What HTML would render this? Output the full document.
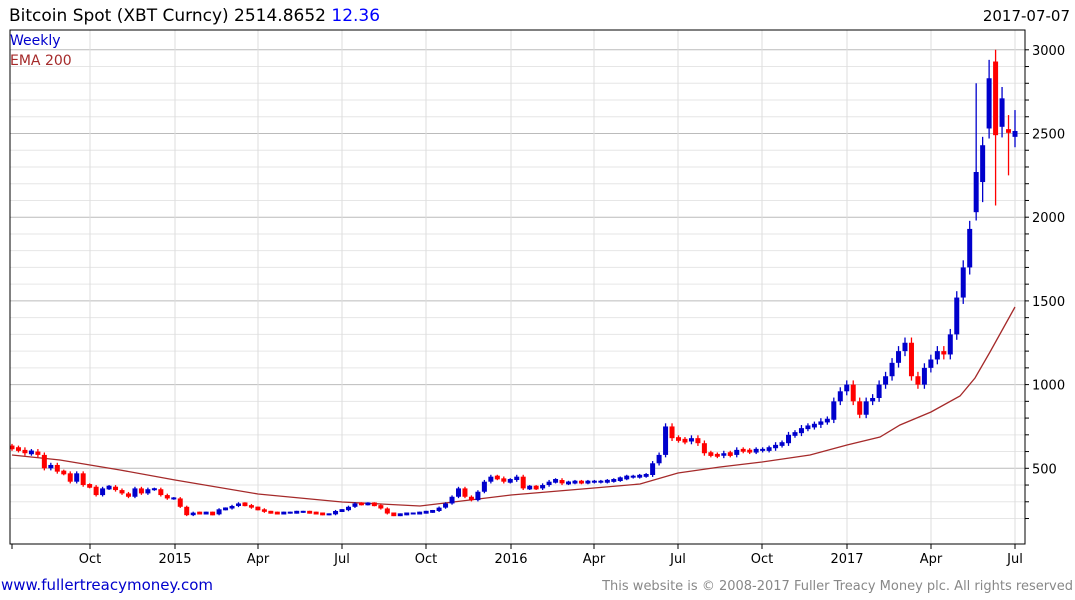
<!DOCTYPE html>
<html><head><meta charset="utf-8"><style>
body{margin:0;background:#fff;width:1075px;height:600px;overflow:hidden;font-family:"DejaVu Sans","Liberation Sans",sans-serif;}
svg{position:absolute;left:0;top:0}
</style></head><body>
<svg id="s" width="1075" height="600" xmlns="http://www.w3.org/2000/svg" font-family="DejaVu Sans, Liberation Sans, sans-serif">
<text x="9" y="21" font-size="17" fill="#000">Bitcoin Spot (XBT Curncy) 2514.8652 <tspan fill="#0000ff">12.36</tspan></text>
<text x="1070" y="21" font-size="15" fill="#000" text-anchor="end">2017-07-07</text>
<g id="grid"></g>
<g id="ema"></g>
<g id="c"></g>
<rect x="10" y="30" width="1015" height="514" fill="none" stroke="#000" stroke-width="1"/>
<text x="10" y="45" font-size="14" fill="#0000cc">Weekly</text>
<text x="10" y="65" font-size="14" fill="#a52a2a">EMA 200</text>
<text x="1" y="590" font-size="15" fill="#0000cc">www.fullertreacymoney.com</text>
<text x="1073" y="590" font-size="13" fill="#888" text-anchor="end">This website is © 2008-2017 Fuller Treacy Money plc. All rights reserved</text>
</svg>
<script>
var NS="http://www.w3.org/2000/svg";
function el(p,t,a,txt){var e=document.createElementNS(NS,t);for(var k in a)e.setAttribute(k,a[k]);if(txt)e.textContent=txt;p.appendChild(e);return e;}
function Y(p){return 552-p*0.1674;}
var g=document.getElementById('grid');
for(var p=200;p<=3000;p+=100){var y=Y(p);if(y<31)continue;var maj=p%500==0;
 el(g,'line',{x1:10,x2:1025,y1:y,y2:y,stroke:maj?'#bbb':'#e6e6e6','stroke-width':1});
 el(g,'line',{x1:1025,x2:1029,y1:y,y2:y,stroke:'#000'});
 if(maj)el(g,'text',{x:1032,y:y+5,'font-size':13,fill:'#000'},String(p));}
var xs=[[90,'Oct'],[175,'2015'],[258,'Apr'],[342,'Jul'],[426,'Oct'],[511,'2016'],[594,'Apr'],[678,'Jul'],[762,'Oct'],[847,'2017'],[931,'Apr'],[1015,'Jul']];
el(g,'line',{x1:12,x2:12,y1:544,y2:549,stroke:'#000'});
xs.forEach(function(a){el(g,'line',{x1:a[0],x2:a[0],y1:30,y2:544,stroke:'#ddd'});el(g,'line',{x1:a[0],x2:a[0],y1:544,y2:549,stroke:'#000'});el(g,'text',{x:a[0],y:563,'font-size':13,'text-anchor':'middle',fill:'#000'},a[1]);});
var cl=[620,610,590,600,580,500,520,480,470,420,470,400,390,
340,380,390,370,350,330,380,350,375,375,340,320,320,
270,220,235,230,235,225,255,260,275,290,280,265,255,
240,235,230,235,235,240,240,235,230,225,225,245,250,
270,290,285,290,280,260,230,220,225,230,230,235,240,
245,265,290,330,380,330,310,360,420,450,440,420,430,
450,380,390,380,400,420,430,410,415,420,415,420,420,
420,425,430,440,450,450,455,460,530,580,750,680,670,
660,680,650,590,580,575,590,580,610,605,600,610,610,
620,640,650,700,710,740,750,760,780,790,900,960,1000,
900,820,900,920,1000,1050,1130,1200,1250,1050,1000,1100,1150,
1200,1180,1300,1520,1700,1930,2270,2430,2830,2490,2710,2510,2515];
var c=document.getElementById('c');var prev=630;var n=cl.length;var st=(1015-12)/(n-1);
for(var i=0;i<n;i++){var x=12+i*st,o=prev,cc=cl[i];
 if(i==n-7)o=2030;if(i==n-6)o=2210;if(i==n-5)o=2530;
 if(i==n-2)o=2520;if(i==n-1)o=2480;
 if(i==n-4)o=2930;if(i==n-3)o=2540;
 var up=cc>=o,col=up?'#0000cc':'#ff0000';
 var hi=Math.max(o,cc)*1.025,lo=Math.min(o,cc)*0.975;
 if(i==n-4){hi=3000;lo=2070;} if(i==n-2){hi=2610;lo=2250;}
 if(i==n-7){hi=2800;lo=1980;} if(i==n-6){hi=2480;lo=2090;} if(i==n-5){hi=2940;lo=2470;}
 if(i==n-1){hi=2640;}
 el(c,'line',{x1:x,x2:x,y1:Y(hi),y2:Y(lo),stroke:col,'stroke-width':1.3});
 var t=Y(Math.max(o,cc)),b=Y(Math.min(o,cc));if(b-t<2){t-=1;b+=1;}
 el(c,'rect',{x:x-2.5,y:t,width:5,height:b-t,fill:col});
 prev=cc;}
var e=[[12,455],[60,460],[120,470],[175,480],[258,494],[342,502],[420,506],[470,500],[511,495],[594,488],[640,484],[678,473],[720,467],[762,462],[810,455],[847,445],[880,437],[900,425],[931,412],[960,396],[975,378],[990,352],[1005,325],[1015,307]];
el(document.getElementById('ema'),'polyline',{points:e.map(function(a){return a.join(',')}).join(' '),fill:'none',stroke:'#a52a2a','stroke-width':1.3});
</script>
</body></html>
